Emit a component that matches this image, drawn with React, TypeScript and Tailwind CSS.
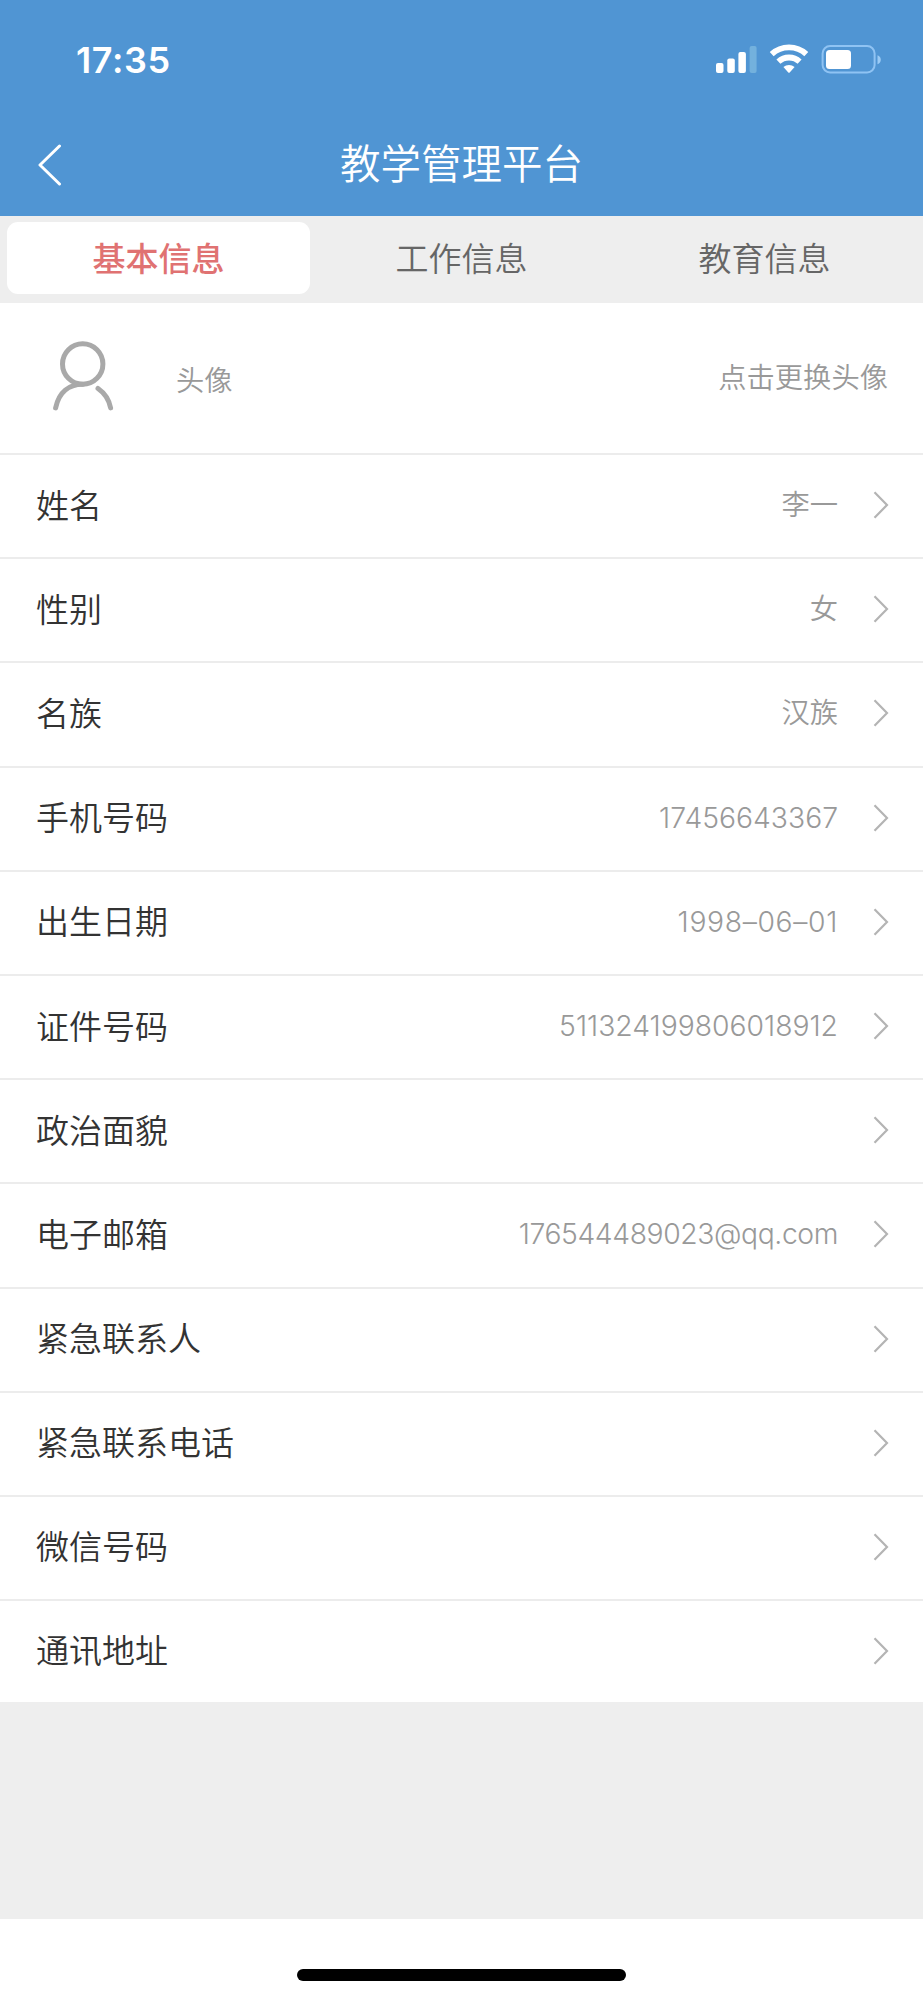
const fields = [
  { label: "姓名", value: "李一" },
  { label: "性别", value: "女" },
  { label: "名族", value: "汉族" },
  { label: "手机号码", value: "17456643367" },
  { label: "出生日期", value: "1998–06–01", tracking: "tracking-[0.65px]" },
  { label: "证件号码", value: "511324199806018912" },
  { label: "政治面貌", value: "" },
  { label: "电子邮箱", value: "176544489023@qq.com", tracking: "tracking-[-0.4px]" },
  { label: "紧急联系人", value: "" },
  { label: "紧急联系电话", value: "" },
  { label: "微信号码", value: "" },
  { label: "通讯地址", value: "" },
];

const tabs = ["基本信息", "工作信息", "教育信息"];

function StatusIcons() {
  return (
    <svg width="166" height="30" viewBox="0 0 166 30" fill="white">
      <rect x="0" y="19" width="7.5" height="10" rx="2" />
      <rect x="11.3" y="14.5" width="7.5" height="14.5" rx="2" />
      <rect x="22.4" y="8" width="7.5" height="21" rx="2" />
      <rect x="33.6" y="2" width="7" height="27" rx="2" fill="#73b1dd" />
      <g fill="none" stroke="white" strokeWidth="5.8">
        <path d="M55.7 10.2 A25.5 25.5 0 0 1 90.3 10.2" />
        <path d="M62.4 17.7 A15.5 15.5 0 0 1 83.6 17.7" />
      </g>
      <path d="M67.4 23 A8.5 8.5 0 0 1 78.6 23 L73.9 28.2 Q73 29.2 72.1 28.2 Z" />
      <rect x="106.6" y="2.1" width="52" height="26.4" rx="7.5" fill="none" stroke="#8fc3f3" strokeWidth="2" />
      <rect x="110" y="6" width="25" height="19" rx="3.5" />
      <path d="M161.5 11.2 Q164.8 12.6 164.8 15.7 Q164.8 18.8 161.5 20.2 Z" fill="#9bcbf5" />
    </svg>
  );
}

function Chevron() {
  return (
    <svg className="mb-0.5" width="16" height="28" viewBox="0 0 16 28" fill="none" stroke="#b4b4b4" strokeWidth="2.2">
      <path d="M1.5 1.2 L14 14 L1.5 26.8" />
    </svg>
  );
}

export default function App() {
  return (
    <main className="flex h-[2000px] w-[923px] flex-col bg-[#eeeeee] font-['Inter','Noto_Sans_CJK_SC',sans-serif]">
      <header className="h-[216px] shrink-0 bg-[#5095d3] text-white">
        <div className="flex h-[118px] items-center justify-between pl-[76px] pr-[41px]">
          <span className="mt-0.5 text-[36px] font-semibold leading-none tracking-[0.6px]">17:35</span>
          <StatusIcons />
        </div>
        <div className="grid h-[94px] grid-cols-[100px_1fr_100px] items-center">
          <svg className="ml-[35px]" width="28" height="42" viewBox="0 0 28 42" fill="none" stroke="white" strokeWidth="3" strokeLinecap="round" strokeLinejoin="round">
            <path d="M24.5 2 L5 21 L24.5 40" />
          </svg>
          <h1 className="text-center text-[40.5px] font-[350] leading-none">教学管理平台</h1>
        </div>
      </header>

      <nav className="flex h-[87px] shrink-0 px-[7px] pt-1.5 pb-[9px]">
        {tabs.map((tab, i) => (
          <button
            key={tab}
            className={
              i === 0
                ? "flex-1 rounded-[11px] bg-white pt-0.5 text-[33px] font-medium leading-none text-[#e07272]"
                : "flex-1 pt-0.5 text-[33px] font-[350] leading-none text-[#666666]"
            }
          >
            {tab}
          </button>
        ))}
      </nav>

      <section className="flex h-[152px] shrink-0 items-center border-b-2 border-[#ececec] bg-white pl-[50px] pr-[35px]">
        <svg className="mb-1" width="66" height="76" viewBox="0 0 66 76" fill="none" stroke="#a9a9a9" strokeWidth="5" strokeLinecap="round">
          <circle cx="32.7" cy="26" r="20.2" />
          <path d="M5.6 69.9 C9 54 19 46.4 32.7 46.3" />
          <path d="M48 50.5 C54.5 55 59 61.5 60.6 69.9" />
        </svg>
        <span className="ml-[60px] mt-1.5 text-[28.3px] font-[350] leading-none text-[#999999]">头像</span>
        <button className="ml-auto text-[28.3px] font-[350] leading-none text-[#999999]">点击更换头像</button>
      </section>

      <ul className="shrink-0 bg-white">
        {fields.map((field) => (
          <li
            key={field.label}
            className="flex h-[104.2px] items-center border-b-2 border-[#ececec] pl-9 pr-[34px] last:h-[101px] last:border-b-0"
          >
            <span className="text-[33px] font-[350] leading-none text-[#333333]">{field.label}</span>
            <span className={`mb-0.5 ml-auto mr-[35px] text-[28.3px] font-[350] leading-none text-[#999999] ${field.tracking ?? ""}`}>
              {field.value}
            </span>
            <Chevron />
          </li>
        ))}
      </ul>

      <footer className="mt-auto flex h-[81px] shrink-0 justify-center bg-white pt-[50px]">
        <div className="h-3 w-[329px] rounded-full bg-black" />
      </footer>
    </main>
  );
}
